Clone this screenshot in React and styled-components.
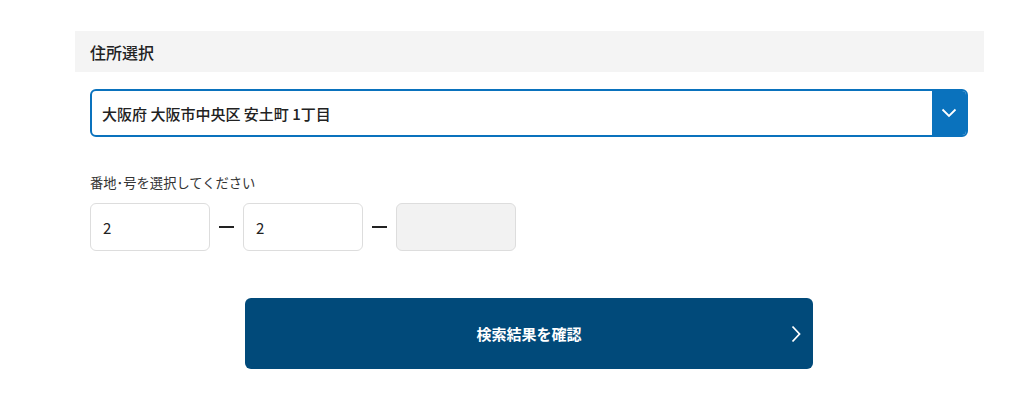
import React from 'react';
import styled, { createGlobalStyle } from 'styled-components';

const GlobalStyle = createGlobalStyle`
  body {
    margin: 0;
    background: #fff;
    font-family: "Noto Sans CJK JP", "Noto Sans", sans-serif;
    color: #222;
  }
`;

function App() {
  return (
    <>
      <GlobalStyle />
      <Page>
        <SectionTitle>住所選択</SectionTitle>

        <Body>
          <Select>
            <span>大阪府 大阪市中央区 安土町 1丁目</span>
            <Arrow>
              <svg width="16" height="10" viewBox="0 0 16 10" fill="none">
                <path d="M1.5 1.5 L8 8 L14.5 1.5" stroke="#fff" strokeWidth="1.8" />
              </svg>
            </Arrow>
          </Select>

          <Label>番地･号を選択してください</Label>

          <NumberRow>
            <NumberBox>2</NumberBox>
            <Dash />
            <NumberBox>2</NumberBox>
            <Dash />
            <NumberBox disabled />
          </NumberRow>

          <ButtonRow>
            <SubmitButton>
              検索結果を確認
              <Chevron width="10" height="18" viewBox="0 0 10 18" fill="none">
                <path d="M1.5 1.5 L8.5 9 L1.5 16.5" stroke="#fff" strokeWidth="1.8" />
              </Chevron>
            </SubmitButton>
          </ButtonRow>
        </Body>
      </Page>
    </>
  );
}

const Page = styled.div`
  width: 909px;
  margin-left: 75px;
  padding-top: 31px;
`;

const SectionTitle = styled.h2`
  margin: 0;
  height: 41px;
  padding: 0 15px;
  display: flex;
  align-items: center;
  background: #f4f4f4;
  font-size: 16px;
  font-weight: 500;
  color: #222;
`;

const Body = styled.div`
  padding: 17px 16px 0 15px;
`;

const Select = styled.div`
  box-sizing: border-box;
  height: 48px;
  display: flex;
  align-items: center;
  justify-content: space-between;
  border: 2px solid #0a72bd;
  border-radius: 6px;
  overflow: hidden;

  > span {
    padding-left: 10px;
    font-size: 15px;
    font-weight: 500;
    color: #222;
  }
`;

const Arrow = styled.div`
  width: 34px;
  height: 100%;
  background: #0a72bd;
  display: flex;
  align-items: center;
  justify-content: center;
`;

const Label = styled.p`
  margin: 37px 0 0;
  font-size: 13.3px;
  line-height: 18px;
  color: #333;
`;

const NumberRow = styled.div`
  margin-top: 11px;
  display: flex;
  align-items: center;
  gap: 9px;
`;

const NumberBox = styled.div`
  box-sizing: border-box;
  width: 120px;
  height: 48px;
  padding-left: 12px;
  display: flex;
  align-items: center;
  border: 1px solid #ddd;
  border-radius: 6px;
  background: ${(p) => (p.disabled ? '#f2f2f2' : '#fff')};
  font-size: 15px;
  color: #222;
`;

const Dash = styled.span`
  width: 15px;
  height: 2px;
  background: #222;
`;

const ButtonRow = styled.div`
  margin-top: 47px;
  display: flex;
  justify-content: center;
`;

const SubmitButton = styled.button`
  position: relative;
  width: 568px;
  height: 71px;
  border: none;
  border-radius: 6px;
  background: #014a7a;
  color: #fff;
  font-family: inherit;
  font-size: 15px;
  font-weight: 700;
`;

const Chevron = styled.svg`
  position: absolute;
  right: 12px;
  top: 50%;
  transform: translateY(-50%);
`;

export default App;
